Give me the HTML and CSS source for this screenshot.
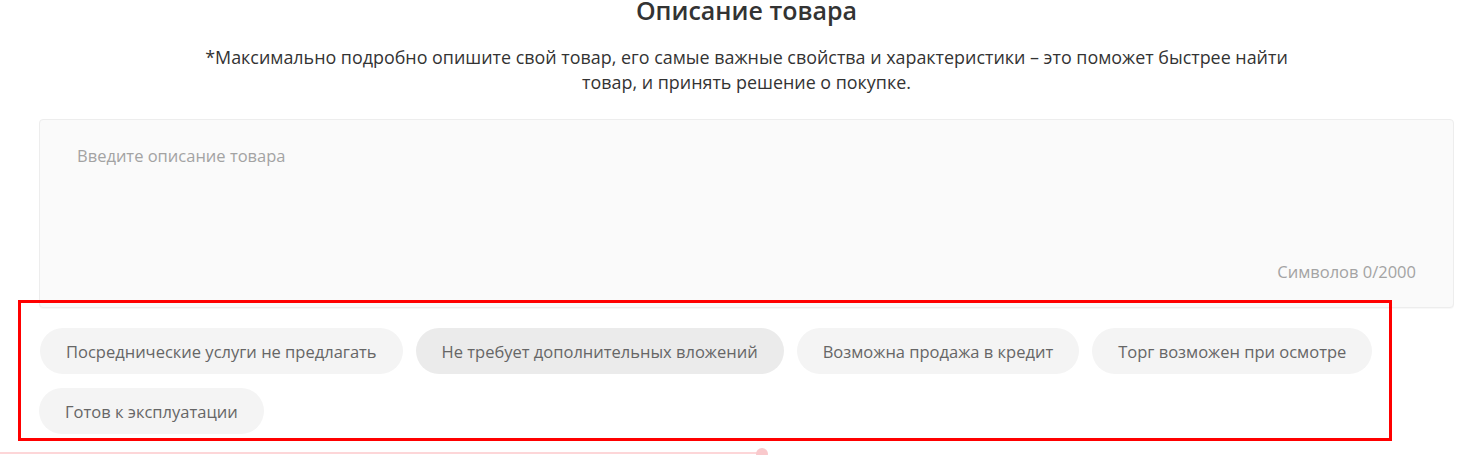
FILE: index.html
```html
<!DOCTYPE html>
<html lang="ru">
<head>
<meta charset="utf-8">
<title>Описание товара</title>
<link rel="stylesheet" href="styles.css">
</head>
<body>
<main class="page">
  <section class="desc">
    <h2 class="desc-title">Описание товара</h2>
    <p class="desc-hint">*Максимально подробно опишите свой товар, его самые важные свойства и характеристики – это поможет быстрее найти товар, и принять решение о покупке.</p>
    <div class="field">
      <div class="field-placeholder">Введите описание товара</div>
      <div class="field-counter">Символов 0/2000</div>
    </div>
    <div class="chips">
      <button class="chip">Посреднические услуги не предлагать</button>
      <button class="chip chip-hover">Не требует дополнительных вложений</button>
      <button class="chip">Возможна продажа в кредит</button>
      <button class="chip">Торг возможен при осмотре</button>
      <button class="chip">Готов к эксплуатации</button>
    </div>
    <div class="highlight"></div>
  </section>
  <div class="slider">
    <div class="slider-fill"></div>
    <div class="slider-thumb"></div>
  </div>
</main>
</body>
</html>
```

FILE: styles.css
```css
html, body {
  margin: 0;
  padding: 0;
  background: #fff;
}
body {
  font-family: "Open Sans", "Liberation Sans", sans-serif;
  color: #333;
  overflow: hidden;
}
.page {
  width: 1478px;
}
.desc {
  position: relative;
  margin-left: 39px;
  width: 1415px;
}
.desc-title {
  margin: 0;
  font-size: 25px;
  line-height: 20px;
  font-weight: 600;
  text-align: center;
  color: #333;
}
.desc-hint {
  margin: 25px auto 0;
  max-width: 1110px;
  font-size: 17.9px;
  line-height: 25px;
  text-align: center;
  color: #333;
}
.field {
  margin-top: 24px;
  height: 189px;
  box-sizing: border-box;
  background: #fafafa;
  border: 1px solid #ededed;
  border-radius: 4px;
  box-shadow: 0 1px 1px rgba(0,0,0,0.03);
  padding: 24px 37px 0 37px;
  display: flex;
  flex-direction: column;
  justify-content: space-between;
}
.field-placeholder {
  font-size: 16.5px;
  line-height: 24px;
  color: #a3a3a3;
}
.field-counter {
  align-self: flex-end;
  font-size: 16.5px;
  line-height: 24px;
  color: #a3a3a3;
  margin-bottom: 23px;
}
.chips {
  margin-top: 20px;
  display: flex;
  flex-wrap: wrap;
  column-gap: 13px;
  row-gap: 14px;
}
.chip {
  height: 46px;
  padding: 0 26px;
  border: none;
  border-radius: 23px;
  background: #f4f4f4;
  font-family: "Open Sans", "Liberation Sans", sans-serif;
  font-size: 16.5px;
  color: #666;
  cursor: pointer;
}
.chip:first-child {
  margin-left: 1px;
}
.chip-hover {
  background: #ebebeb;
}
.highlight {
  position: absolute;
  left: -21px;
  top: 300px;
  width: 1374px;
  height: 141px;
  box-sizing: border-box;
  border: 3px solid #ff0000;
  pointer-events: none;
}
.slider {
  position: relative;
  margin-top: 18px;
  height: 10px;
}
.slider-fill {
  width: 760px;
  height: 2px;
  background: #fdd6d8;
}
.slider-thumb {
  position: absolute;
  left: 756px;
  top: -4px;
  width: 12px;
  height: 12px;
  border-radius: 50%;
  background: #f9c9cc;
}
```
